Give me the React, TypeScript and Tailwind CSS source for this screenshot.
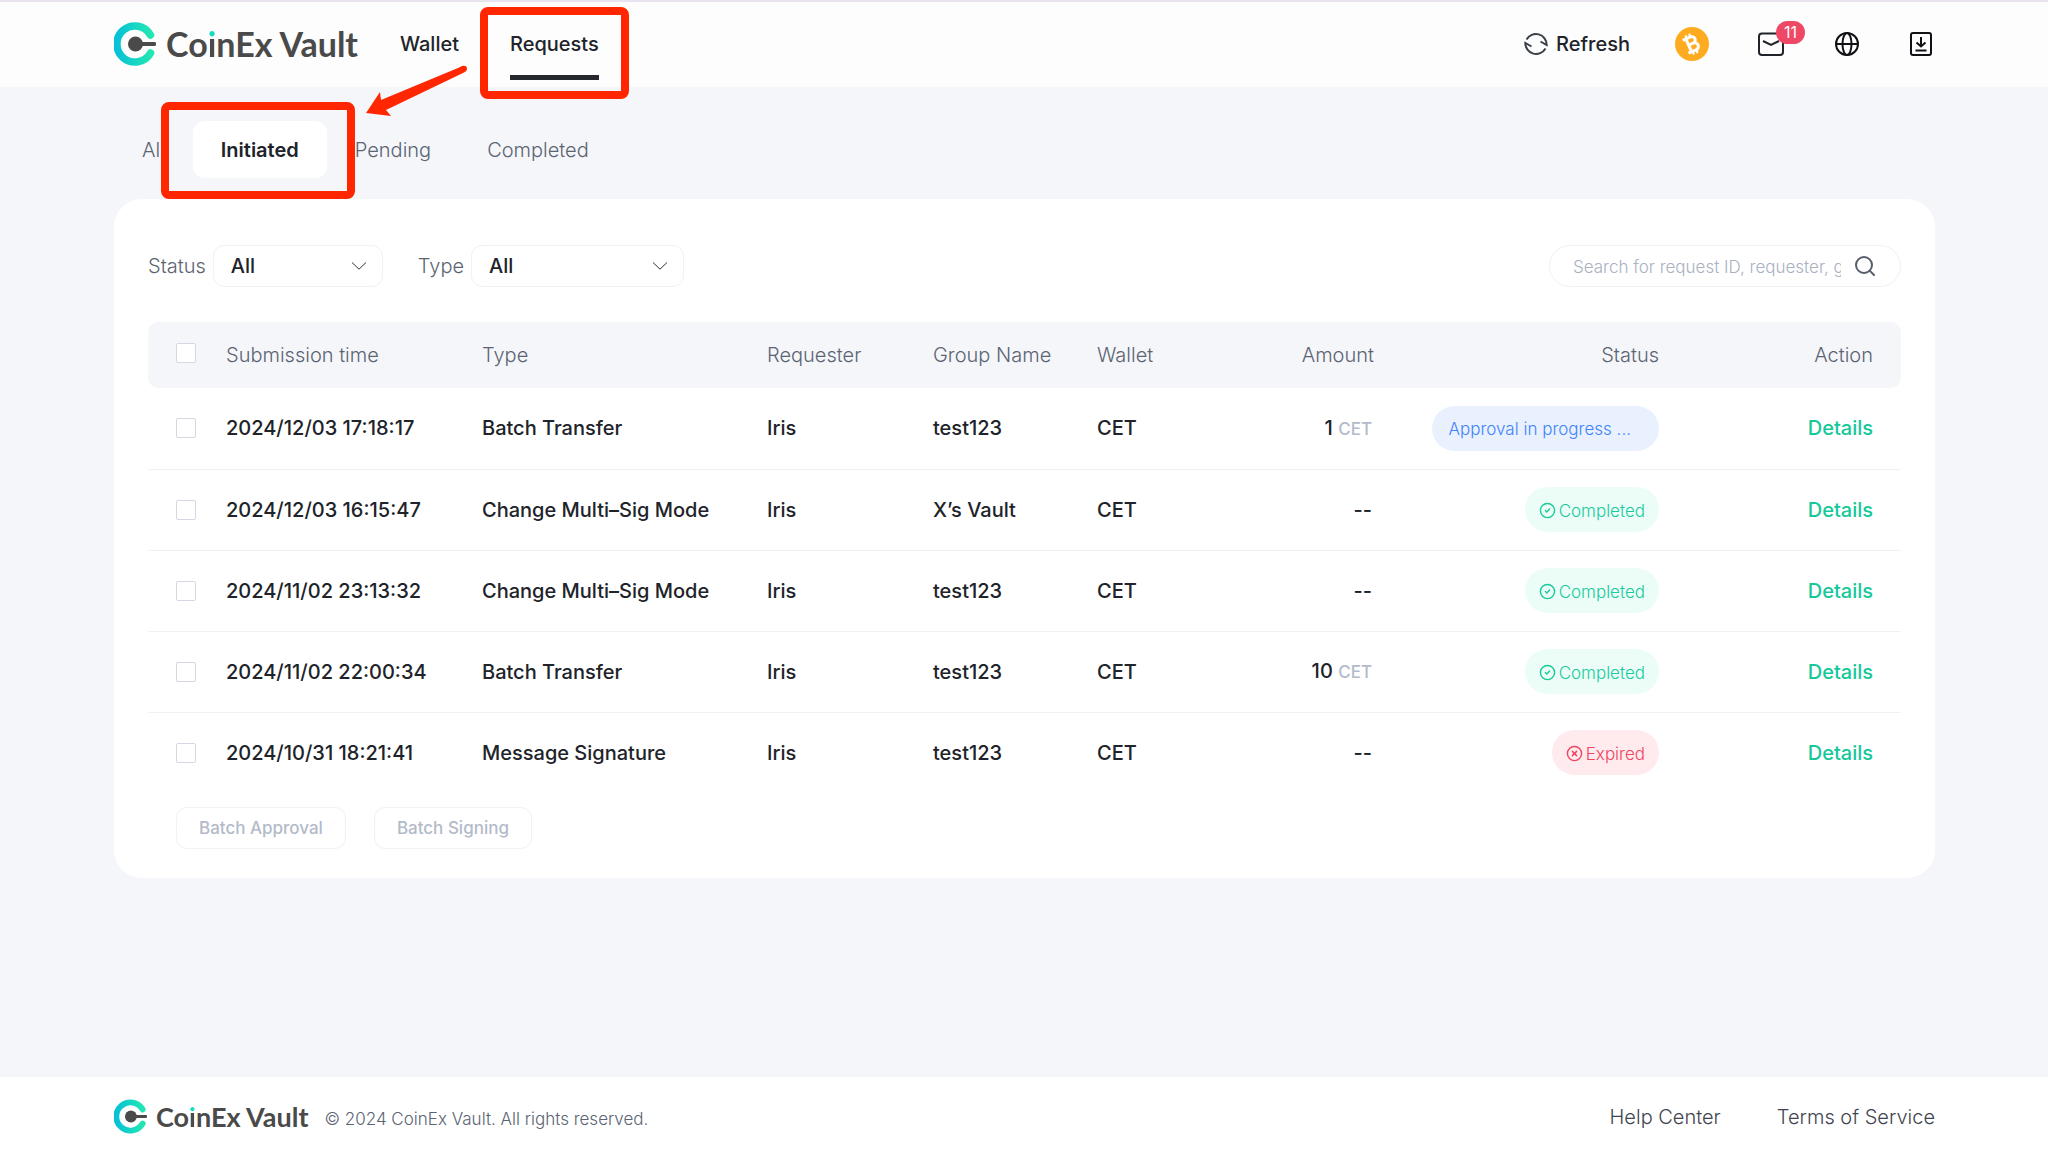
import { useState } from "react";
import { CircleCheck, CircleX, Search } from "lucide-react";

const rows = [
    { time: "2024/12/03 17:18:17", type: "Batch Transfer", group: "test123", amount: "1", status: "pending" },
    { time: "2024/12/03 16:15:47", type: "Change Multi–Sig Mode", group: "X’s Vault", amount: "", status: "completed" },
    { time: "2024/11/02 23:13:32", type: "Change Multi–Sig Mode", group: "test123", amount: "", status: "completed" },
    { time: "2024/11/02 22:00:34", type: "Batch Transfer", group: "test123", amount: "10", status: "completed" },
    { time: "2024/10/31 18:21:41", type: "Message Signature", group: "test123", amount: "", status: "expired" },
];

const tabs = ["All", "Initiated", "Pending", "Completed"];

const LogoMark = ({ className, id }: { className: string; id: string }) => (
    <svg viewBox="0 0 42 44" className={className} aria-hidden="true">
        <defs>
            <linearGradient id={id} x1="0" y1="0" x2="1" y2="0">
                <stop offset="0" stopColor="#07c2d6" />
                <stop offset="1" stopColor="#22e6b4" />
            </linearGradient>
        </defs>
        <path d="M36.500 13A18 18 0 1 0 36.500 31" fill="none" stroke={`url(#${id})`} strokeWidth="7.500" strokeLinecap="round" />
        <circle cx="21.500" cy="22" r="7.500" fill="#4a4a4a" />
        <path d="M22 22H40.500" stroke="#4a4a4a" strokeWidth="3.800" strokeLinecap="round" />
    </svg>
)

const LogoText = ({ className }: { className: string }) => (
    <span className={`font-['Lato'] font-bold text-[#4a4a4a] ${className}`}>
        Co<span className="bg-linear-to-b from-[#15dcc0] from-35% to-[#4a4a4a] to-35% bg-clip-text text-transparent">i</span>nEx Vault
    </span>
)

const StatusPill = ({ status }: { status: string }) => {
    if (status === "pending") {
        return <span className="inline-flex h-[45px] items-center rounded-full bg-[#e9f1ff] pl-[17px] pr-7 pt-[2px] text-[#3f83fb]">Approval in progress ...</span>
    }
    if (status === "expired") {
        return (
            <span className="inline-flex h-[45px] items-center gap-[3px] rounded-full bg-[#ffebee] px-[14px] pt-[2px] text-[#f04461]">
                <CircleX size={17} strokeWidth={2} />Expired
            </span>
        )
    }
    return (
        <span className="inline-flex h-[45px] items-center gap-[3px] rounded-full bg-[#ecfdf8] px-[14px] pt-[2px] text-[#17cb9c]">
            <CircleCheck size={17} strokeWidth={2} />Completed
        </span>
    )
}

const Select = ({ id, label, className }: { id: string; label: string; className: string }) => (
    <div className="flex items-center gap-[7px]">
        <label htmlFor={id} className="font-light text-[#5b6472]">{label}</label>
        <div className="relative">
            <select id={id} className={`h-[42px] appearance-none rounded-[11px] border border-[#f1f1f6] bg-white pl-[17px] pr-10 font-medium text-[#202329] ${className}`}>
                <option>All</option>
            </select>
            <svg viewBox="0 0 14 8" className="pointer-events-none absolute right-[17px] top-[17px] h-2 w-[14px]" fill="none" stroke="#30343b" aria-hidden="true">
                <path d="M0 0.500L7 7.200L14 0.500" />
            </svg>
        </div>
    </div>
)

const Checkbox = ({ label }: { label: string }) => (
    <input type="checkbox" aria-label={label} className="block size-5 appearance-none rounded-[2px] border border-[#d5d8e2] bg-white checked:bg-[#17cb9c]" />
)

const Header = () => (
    <header className="relative flex h-[87px] items-center border-t-2 border-[#e9e2ef] bg-[#fdfdfd] pb-[2px] pl-[114px] pr-[116px] font-medium text-[#202329]">
        <a href="#" className="flex items-center gap-[10px]" aria-label="CoinEx Vault">
            <LogoMark id="logo-top" className="h-[44px] w-[42px]" />
            <LogoText className="text-[34px]" />
        </a>
        <nav className="ml-[42px] flex h-full items-center gap-[51px]">
            <a href="#wallet">Wallet</a>
            <a href="#requests" className="relative flex h-full items-center">
                Requests
                <span className="absolute inset-x-0 bottom-[5px] h-[5px] bg-[#25292d]" />
                {/* highlight frame */}
                <span className="absolute -inset-x-[30px] top-[5px] h-[92px] rounded-lg border-8 border-[#ff2600]" />
            </a>
        </nav>
        <div className="ml-auto flex items-center">
            <button className="flex items-center gap-2">
                <svg viewBox="0 0 24 24" className="size-6" fill="none" stroke="#3b4048" strokeWidth="2">
                    <path d="M2.500 7.500A10.800 10.800 0 0 1 22.700 13L16.500 9.500M21.500 16.500A10.800 10.800 0 0 1 1.300 11L7.500 14.500" />
                </svg>
                Refresh
            </button>
            <button aria-label="Coin" className="ml-[45px]">
                <svg viewBox="0 0 34 34" className="size-[34px]">
                    <circle cx="17" cy="17" r="17" fill="#ffab1f" />
                    <g transform="rotate(-24 17 17)" fill="none" stroke="#fff" strokeWidth="3">
                        <path d="M10 10H18.500A3.300 3.300 0 0 1 18.500 16.700H14M18.500 16.700A3.600 3.600 0 0 1 18.500 24H10M13.500 10V24" />
                        <path d="M14.500 6.500V10M18.500 6.500V10M14.500 24V27.500M18.500 24V27.500" strokeWidth="2.200" />
                    </g>
                </svg>
            </button>
            <button aria-label="Messages" className="relative ml-[49px]">
                <svg viewBox="0 0 26 24" className="h-6 w-[26px]" fill="none" stroke="#202329" strokeWidth="2">
                    <rect x="1" y="1.500" width="24" height="21.500" rx="3" />
                    <path d="M5 9L13 13L21 9" />
                </svg>
                <span className="absolute -top-[11px] left-[18px] flex h-[23px] w-[29px] items-center justify-center rounded-full bg-[#ee4866] text-base font-normal text-white">11</span>
            </button>
            <button aria-label="Language" className="ml-[51px]">
                <svg viewBox="0 0 24 24" className="size-6" fill="none" stroke="#101114" strokeWidth="2">
                    <circle cx="12" cy="12" r="11" />
                    <ellipse cx="12" cy="12" rx="4.500" ry="11" />
                    <path d="M1 12H23" />
                </svg>
            </button>
            <button aria-label="Download" className="ml-[51px]">
                <svg viewBox="0 0 22 24" className="h-6 w-[22px]" fill="none" stroke="#101114" strokeWidth="2">
                    <rect x="1" y="1" width="20" height="22" rx="2" />
                    <path d="M11 5V14M6.500 10.500L11 14.500L15.500 10.500M5.500 18.500H16.500" />
                </svg>
            </button>
        </div>
        <svg viewBox="0 0 104 56" className="absolute left-[364px] top-[61px] h-[56px] w-[104px]" fill="#ff2600" aria-hidden="true">
            <path d="M98 3Q103 2 103 6Q103 8 100 9.500L22 47L27 53L2 50L16 29L17 37L94 5Z" />
        </svg>
    </header>
)

const RequestTable = () => (
    <table className="mt-[35px] w-full table-fixed text-left">
        <colgroup>
            <col className="w-[78px]" />
            <col className="w-[256px]" />
            <col className="w-[285px]" />
            <col className="w-[166px]" />
            <col className="w-[164px]" />
            <col className="w-[117px]" />
            <col className="w-[160px]" />
            <col className="w-[285px]" />
            <col className="w-[242px]" />
        </colgroup>
        <thead>
            <tr className="h-[66px] bg-[#f5f6fa] text-[#5b6472] *:font-light">
                <th className="rounded-l-[10px] pb-1 pl-7"><Checkbox label="Select all" /></th>
                <th>Submission time</th>
                <th>Type</th>
                <th>Requester</th>
                <th>Group Name</th>
                <th>Wallet</th>
                <th className="text-right">Amount</th>
                <th className="text-right">Status</th>
                <th className="rounded-r-[10px] pr-7 text-right">Action</th>
            </tr>
        </thead>
        <tbody>
            {rows.map((row) => (
                <tr key={row.time} className="h-[81px] border-b border-[#f0f1f5] font-medium text-[#202329] last:border-b-0">
                    <td className="pl-7"><Checkbox label={row.time} /></td>
                    <td>{row.time}</td>
                    <td>{row.type}</td>
                    <td>Iris</td>
                    <td>{row.group}</td>
                    <td>CET</td>
                    <td className="pr-[2px] text-right">
                        {row.amount ? <>{row.amount} <span className="text-[17px] text-[#b3bac9]">CET</span></> : "--"}
                    </td>
                    <td className="text-right text-[17px] font-light"><StatusPill status={row.status} /></td>
                    <td className="pr-7 text-right"><a href="#details" className="text-[#14c89a]">Details</a></td>
                </tr>
            ))}
        </tbody>
    </table>
)

const App = () => {
    const [activeTab, setActiveTab] = useState("Initiated");
    return (
        <div className="flex min-h-screen flex-col bg-[#f5f6fa] font-['Inter',sans-serif] text-xl leading-7">
            <Header />
            <main className="grow pb-10 pl-[114px] pr-[113px]">
                <div className="flex pb-[21px] pt-[34px]">
                    {tabs.map((tab) => (
                        <button
                            key={tab}
                            onClick={() => setActiveTab(tab)}
                            className={`relative h-[57px] rounded-xl px-7 ${activeTab === tab ? "bg-white font-semibold text-[#202329]" : "font-light text-[#5b6472]"}`}>
                            {tab}
                            {tab === "Initiated" && <span className="absolute -bottom-[21px] -left-8 -right-7 -top-[19px] z-10 rounded-lg border-8 border-[#ff2600]" />}
                        </button>
                    ))}
                </div>
                <section className="rounded-[28px] bg-white px-[34px] pb-[29px] pt-[46px]">
                    <div className="flex items-center gap-[35px]">
                        <Select id="status" label="Status" className="w-[170px]" />
                        <Select id="type" label="Type" className="w-[213px]" />
                        <div className="ml-auto flex h-[42px] w-[352px] items-center rounded-full border border-[#f1f1f6] pl-[23px] pr-[23px]">
                            <input type="text" aria-label="Search" placeholder="Search for request ID, requester, group name" className="min-w-0 grow pt-[2px] text-[17px] font-light outline-none placeholder:text-[#a9b1c2]" />
                            <button aria-label="Submit search" className="ml-3">
                                <Search size={24} strokeWidth={2} className="text-[#565e6b]" />
                            </button>
                        </div>
                    </div>
                    <RequestTable />
                    <div className="mt-[14px] flex gap-7 pl-7 text-[17px] font-medium text-[#b3bac9]">
                        <button className="h-[42px] rounded-[11px] border border-[#f1f1f6] px-[22px]">Batch Approval</button>
                        <button className="h-[42px] rounded-[11px] border border-[#f1f1f6] px-[22px]">Batch Signing</button>
                    </div>
                </section>
            </main>
            <footer className="flex h-[79px] items-center bg-white pl-[114px] pr-[113px] text-[#3f4550]">
                <LogoMark id="logo-bottom" className="h-[35px] w-[33px]" />
                <LogoText className="ml-[9px] text-[27px]" />
                <p className="ml-4 pt-1 text-[17px] font-light text-[#5b6472]">© 2024 CoinEx Vault. All rights reserved.</p>
                <a href="#help" className="ml-auto font-light">Help Center</a>
                <a href="#terms" className="ml-14 font-light">Terms of Service</a>
            </footer>
        </div>
    )
}
export default App;
